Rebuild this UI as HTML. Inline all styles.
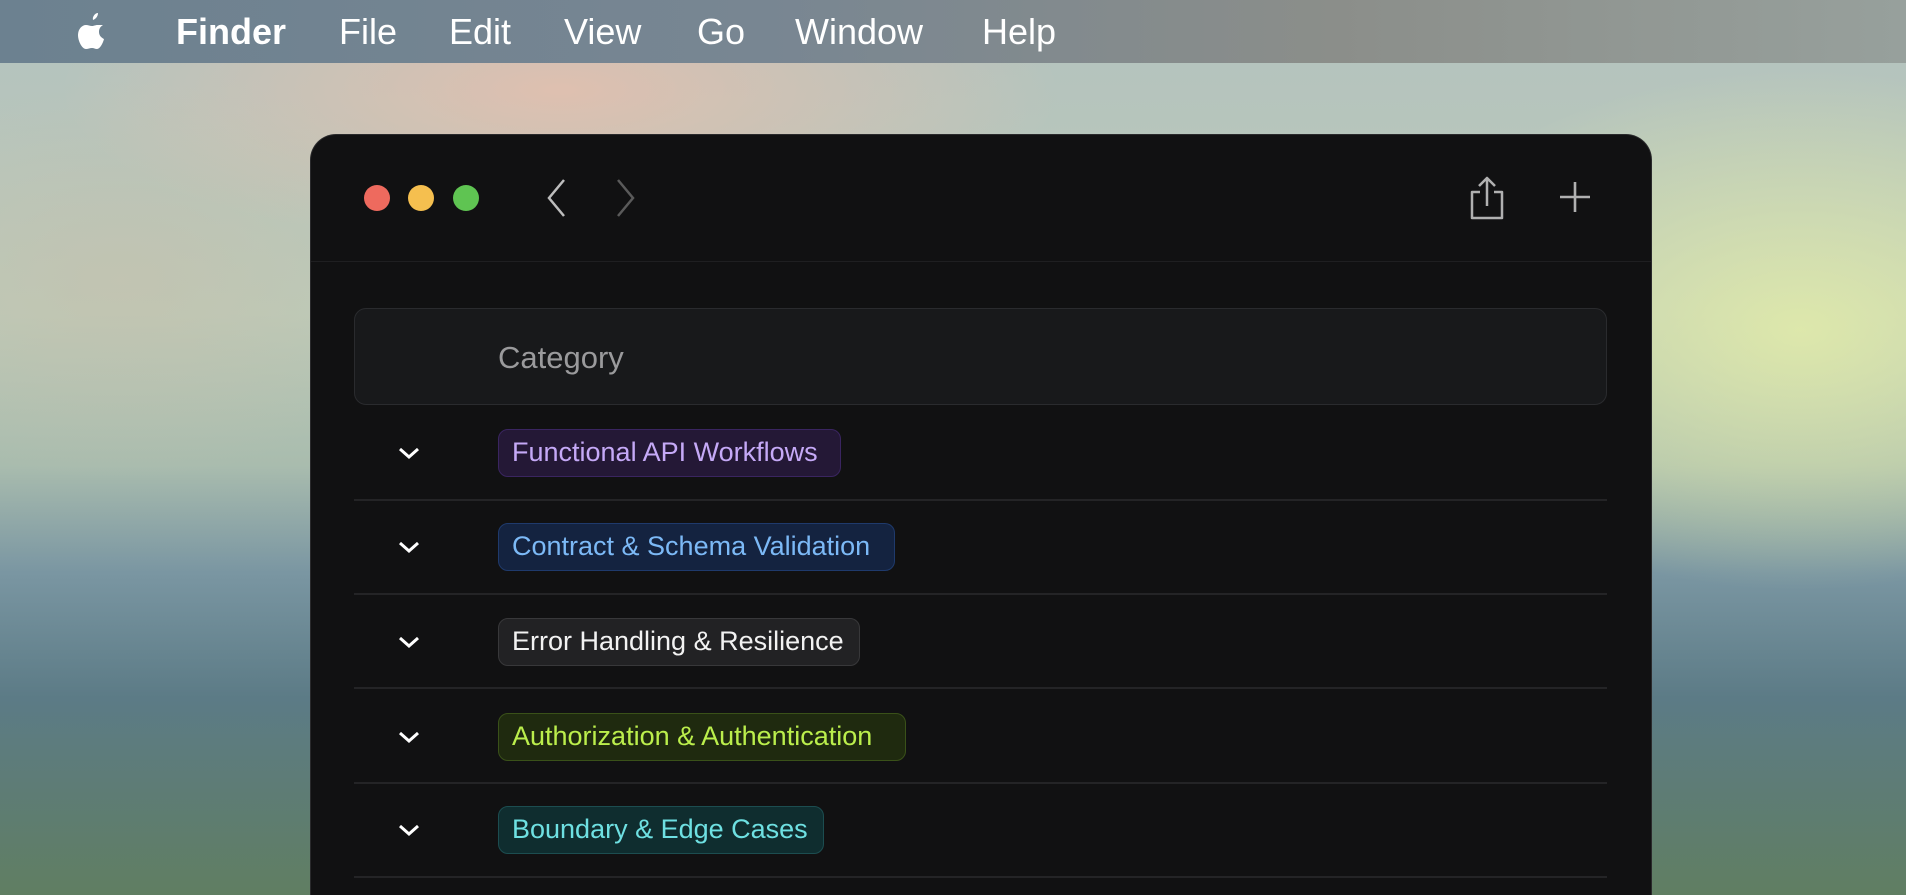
<!DOCTYPE html>
<html style="width:1906px;height:895px;overflow:hidden"><head><meta charset="utf-8"><style>
*{margin:0;padding:0;box-sizing:border-box}
body{width:1906px;height:895px;overflow:hidden;position:relative;font-family:"Liberation Sans",sans-serif;
background:
radial-gradient(ellipse 500px 160px at 560px 90px,rgba(240,190,170,.7),transparent),
radial-gradient(ellipse 420px 260px at 1800px 330px,rgba(225,235,170,.9),transparent),
radial-gradient(ellipse 300px 200px at 120px 280px,rgba(200,190,170,.5),transparent),
linear-gradient(180deg,#b3c2bf 0%,#bccab8 35%,#a9bcae 52%,#7a96a2 64%,#5c7b86 78%,#607e62 100%);}
.menu{position:absolute;left:0;top:0;width:1906px;height:63px;background:linear-gradient(90deg,#6c8190,#788692 40%,#8b8e8a 70%,#97a09c);color:#fff;font-size:36px}
.menu span{position:absolute;top:12px;line-height:40px}
.win{position:absolute;left:310px;top:134px;width:1342px;height:761px;background:#111112;border-radius:26px 26px 0 0;border:1px solid #2a2a2c;border-bottom:none}
.dot{position:absolute;top:185px;width:26px;height:26px;border-radius:50%}
.hl{position:absolute;left:311px;width:1340px;top:261px;height:1px;background:#1f1f21}
.cat{position:absolute;left:354px;top:308px;width:1253px;height:97px;background:#18191b;border:1.5px solid #2a2b2e;border-radius:12px}
.cat span{position:absolute;left:143px;top:31px;font-size:31px;color:#9a9a9c}
.sep{position:absolute;left:354px;width:1253px;height:2px;background:#242426}
.badge{position:absolute;left:498px;height:48px;border-radius:10px;border:1.5px solid;font-size:27px;line-height:45px;padding-left:13px;white-space:nowrap}
.chev{position:absolute;left:397px}
</style></head><body>
<div class="menu">
<svg style="position:absolute;left:72px;top:11px" width="38" height="42" viewBox="0 0 38 42"><path fill="#fff" d="M26 2c0 3-2 6-5 7-1-3 2-7 5-7zM31 14c-3 2-4 4-4 7 0 4 3 6 5 7-1 4-4 10-7 10-2 0-3-1-5-1s-4 1-6 1c-4 0-8-8-8-14 0-6 4-10 8-10 2 0 4 1 6 1s3-1 6-1c2 0 4 0 5 0z"/></svg>
<span style="left:176px;font-weight:bold">Finder</span>
<span style="left:339px">File</span>
<span style="left:449px">Edit</span>
<span style="left:564px">View</span>
<span style="left:697px">Go</span>
<span style="left:795px">Window</span>
<span style="left:982px">Help</span>
</div>
<div class="win"></div>
<div class="dot" style="left:364px;background:#ee6a5e"></div>
<div class="dot" style="left:408px;background:#f5bf4f"></div>
<div class="dot" style="left:453px;background:#5fc452"></div>
<svg style="position:absolute;left:540px;top:178px" width="30" height="40"><path d="M24 2 L9 20 L24 38" stroke="#bdbdbd" stroke-width="2.5" fill="none"/></svg>
<svg style="position:absolute;left:612px;top:178px" width="30" height="40"><path d="M6 2 L21 20 L6 38" stroke="#5a5a5a" stroke-width="2.5" fill="none"/></svg>
<svg style="position:absolute;left:1468px;top:174px" width="38" height="48"><path d="M12 18 H4 V44 H34 V18 H26 M19 32 V4 M11 12 L19 4 L27 12" stroke="#b0b0b0" stroke-width="2.5" fill="none" stroke-linejoin="round"/></svg>
<svg style="position:absolute;left:1558px;top:180px" width="34" height="34"><path d="M17 2 V32 M2 17 H32" stroke="#b0b0b0" stroke-width="2.6"/></svg>
<div class="hl"></div>
<div class="cat"><span>Category</span></div>

<svg class="chev" style="top:446px" width="24" height="14"><path d="M3 3 L12 11 L21 3" stroke="#fff" stroke-width="3" fill="none"/></svg>
<div class="badge" style="top:429px;width:343px;background:#241836;border-color:#3a2560;color:#c5a9f7">Functional API Workflows</div>
<div class="sep" style="top:499px"></div>
<svg class="chev" style="top:540px" width="24" height="14"><path d="M3 3 L12 11 L21 3" stroke="#fff" stroke-width="3" fill="none"/></svg>
<div class="badge" style="top:523px;width:397px;background:#142340;border-color:#1f3a6c;color:#7cb9f6">Contract &amp; Schema Validation</div>
<div class="sep" style="top:593px"></div>
<svg class="chev" style="top:635px" width="24" height="14"><path d="M3 3 L12 11 L21 3" stroke="#fff" stroke-width="3" fill="none"/></svg>
<div class="badge" style="top:618px;width:362px;background:#222224;border-color:#38383a;color:#f2f2f2">Error Handling &amp; Resilience</div>
<div class="sep" style="top:687px"></div>
<svg class="chev" style="top:730px" width="24" height="14"><path d="M3 3 L12 11 L21 3" stroke="#fff" stroke-width="3" fill="none"/></svg>
<div class="badge" style="top:713px;width:408px;background:#1f2a0f;border-color:#3a5119;color:#bbee4c">Authorization &amp; Authentication</div>
<div class="sep" style="top:782px"></div>
<svg class="chev" style="top:823px" width="24" height="14"><path d="M3 3 L12 11 L21 3" stroke="#fff" stroke-width="3" fill="none"/></svg>
<div class="badge" style="top:806px;width:326px;background:#0f2d2f;border-color:#1c4d50;color:#6ee0e2">Boundary &amp; Edge Cases</div>
<div class="sep" style="top:876px"></div>
</body></html>
